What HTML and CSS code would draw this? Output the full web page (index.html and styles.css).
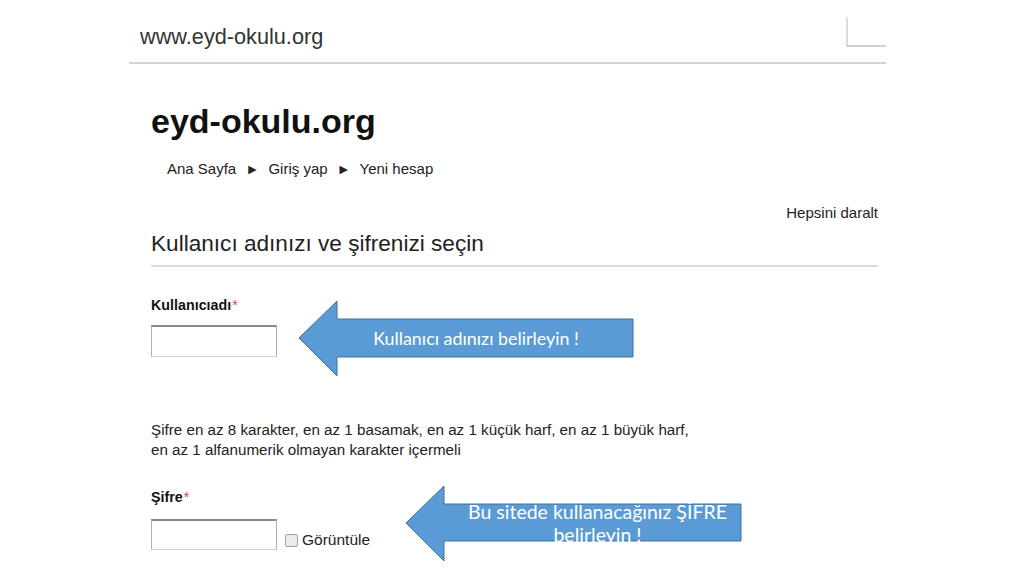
FILE: index.html
```
<!DOCTYPE html>
<html lang="tr">
<head>
    <meta charset="UTF-8">
    <meta name="viewport" content="width=device-width, initial-scale=1.0">
    <title>Yeni hesap</title>
    <link rel="stylesheet" href="styles.css">
</head>
<body>
    <div class="topbar">
        <span class="site-url">www.eyd-okulu.org</span>
        <span class="corner"></span>
    </div>

    <div class="main">
        <h1>eyd-okulu.org</h1>
        <div class="breadcrumb">
            <span>Ana Sayfa</span>
            <span class="sep">&#9658;</span>
            <span>Giriş yap</span>
            <span class="sep">&#9658;</span>
            <span>Yeni hesap</span>
        </div>
        <div class="collapse-all">Hepsini daralt</div>
        <h2>Kullanıcı adınızı ve şifrenizi seçin</h2>

        <form class="signup">
            <label class="field-label" for="username">Kullanıcıadı<span class="req">*</span></label>
            <input type="text" id="username" class="text-input">

            <p class="hint">Şifre en az 8 karakter, en az 1 basamak, en az 1 küçük harf, en az 1 büyük harf,<br>en az 1 alfanumerik olmayan karakter içermeli</p>

            <label class="field-label pass-label" for="password">Şifre<span class="req">*</span></label>
            <div class="pass-row">
                <input type="password" id="password" class="text-input">
                <label class="show-pass"><input type="checkbox" class="check">Görüntüle</label>
            </div>
        </form>
    </div>

    <div class="callout callout-user">
        <svg width="336" height="77" viewBox="0 0 336 77">
            <polygon points="1,38 39,1 39,19 335,19 335,57 39,57 39,76" fill="#5b9bd5" stroke="#41719c" stroke-width="1"/>
        </svg>
        <div class="callout-text">Kullanıcı adınızı belirleyin !</div>
    </div>

    <div class="callout callout-pass">
        <svg width="337" height="77" viewBox="0 0 337 77">
            <polygon points="1,38 39,1 39,19 336,19 336,56 39,56 39,76" fill="#5b9bd5" stroke="#41719c" stroke-width="1"/>
        </svg>
        <div class="callout-text">Bu sitede kullanacağınız ŞİFRE<br>belirleyin !</div>
    </div>
</body>
</html>
```

FILE: styles.css
```
body {
    font-family: "Liberation Sans", Arial, sans-serif;
    background-color: #fff;
    color: #222;
    margin: 0;
    position: relative;
    height: 576px;
    overflow: hidden;
}
.topbar {
    display: flex;
    justify-content: space-between;
    align-items: flex-end;
    height: 64px;
    margin: 0 138px 0 129px;
    padding-left: 11px;
    border-bottom: 2px solid #d4d4d4;
    box-sizing: border-box;
}
.site-url {
    font-size: 21.7px;
    line-height: 24px;
    color: #333;
    margin-bottom: 13px;
}
.corner {
    width: 40px;
    height: 30px;
    border-left: 2px solid #dcdcdc;
    border-bottom: 2px solid #d0d0d0;
    box-sizing: border-box;
    margin-bottom: 15px;
}
.main {
    margin-left: 151px;
    width: 727px;
}
h1 {
    font-size: 34px;
    line-height: 40px;
    font-weight: bold;
    color: #111;
    margin: 37px 0 0 0;
}
.breadcrumb {
    font-size: 15px;
    line-height: 18px;
    margin-top: 19px;
    padding-left: 16px;
    color: #222;
}
.breadcrumb .sep {
    font-size: 14px;
    margin: 0 5px;
}
.collapse-all {
    font-size: 15px;
    line-height: 18px;
    text-align: right;
    margin-top: 26px;
}
h2 {
    font-size: 22.6px;
    line-height: 26px;
    font-weight: normal;
    color: #222;
    margin: 9px 0 0 0;
    padding-bottom: 8px;
    border-bottom: 2px solid #dcdcdc;
}
.signup {
    display: flex;
    flex-direction: column;
    align-items: flex-start;
}
.field-label {
    font-size: 14.3px;
    line-height: 18px;
    font-weight: bold;
    color: #111;
    margin-top: 29px;
}
.req {
    color: #d9433b;
    font-weight: normal;
    margin-left: 1px;
}
.text-input {
    width: 126px;
    height: 32px;
    margin: 11px 0 0 0;
    padding: 0;
    box-sizing: border-box;
    border: 1px solid #b0b0b0;
    border-top: 2px solid #8a8a8a;
    border-bottom-color: #d0d0d0;
    background: #fff;
}
.hint {
    font-size: 15.2px;
    line-height: 20px;
    margin: 63px 0 0 0;
    color: #222;
}
.pass-label {
    margin-top: 28px;
}
.pass-row {
    display: flex;
    align-items: flex-end;
    margin-top: 2px;
}
.pass-row .text-input {
    height: 31px;
}
.show-pass {
    display: flex;
    align-items: center;
    font-size: 15.5px;
    margin-left: 8px;
    margin-bottom: 1px;
    color: #222;
}
.check {
    appearance: none;
    width: 13px;
    height: 13px;
    margin: 0 4px 0 0;
    border: 1px solid #a0a0a0;
    border-radius: 2px;
    background: #ececec;
}
.callout {
    position: absolute;
}
.callout svg {
    display: block;
}
.callout-text {
    position: absolute;
    left: 20px;
    right: 0;
    text-align: center;
    color: #fff;
    font-family: Lato, "Open Sans", sans-serif;
}
.callout-user {
    left: 298px;
    top: 300px;
}
.callout-user .callout-text {
    top: 27px;
    font-size: 17.9px;
    line-height: 22px;
}
.callout-pass {
    left: 405px;
    top: 485px;
}
.callout-pass .callout-text {
    left: 48px;
    top: 15px;
    font-size: 19.5px;
    line-height: 23px;
}
```
